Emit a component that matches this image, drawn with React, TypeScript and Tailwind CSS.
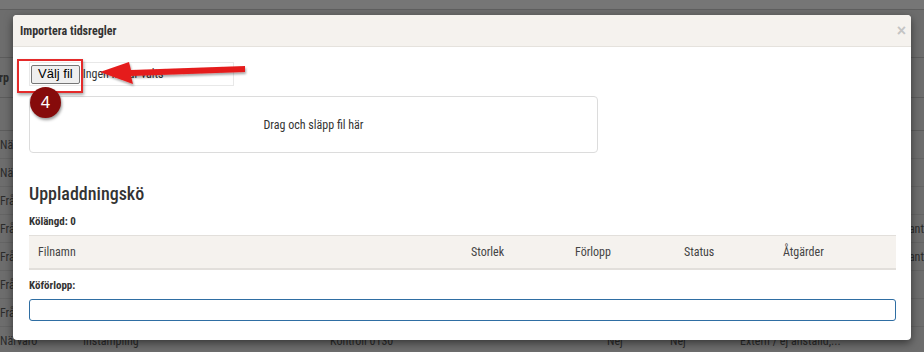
const font = "font-['Roboto_Condensed',Roboto,sans-serif]";

const bgRows = ['Nä', 'Nä', 'Frå', 'Frå', 'Frå', 'Frå', 'Frå'];

function Background() {
  return (
    <div className={`h-full w-full bg-[#6d6d6d] text-[12px] text-[#2b2b2b] ${font}`}>
      <div className="h-[10px] border-b border-[#5f5f5f] bg-[#767676]" />
      <div className="h-[47px]" />
      <div className="flex h-[41px] items-center border-y border-[#5c5c5c] font-bold">
        <span className="-ml-[1px]">rp</span>
      </div>
      <div className="h-[33px] border-b border-[#5c5c5c]" />
      {bgRows.map((r, i) => (
        <div key={i} className="flex h-[28px] items-center justify-between border-b border-[#646464]">
          <span>{r}</span>
          <span>{i === 3 || i === 4 ? 'ant' : ''}</span>
        </div>
      ))}
      <div className="flex h-[28px] items-center">
        <span className="w-[83px]">Närvaro</span>
        <span className="w-[247px]">Instämpling</span>
        <span className="w-[277px]">Kontroll 0130</span>
        <span className="w-[63px]">Nej</span>
        <span className="w-[70px]">Nej</span>
        <span>Extern / ej anställd,...</span>
      </div>
    </div>
  );
}

function Annotation() {
  return (
    <>
      <div className="absolute left-[17px] top-[59px] h-[34px] w-[66px] border-2 border-[#e42a2a] shadow-[1px_2px_3px_rgba(0,0,0,0.35)]" />
      <svg className="absolute left-[95px] top-[58px]" width="160" height="34" viewBox="0 0 160 34">
        <defs>
          <filter id="sh" x="-10%" y="-30%" width="130%" height="170%">
            <feDropShadow dx="1" dy="2" stdDeviation="1.2" floodColor="#000" floodOpacity="0.35" />
          </filter>
        </defs>
        <g filter="url(#sh)" fill="#e51c1c" stroke="none">
          <path d="M5 14 L34 4 L36 12 L150 8 L150 14 L36 18 L38 26 Z" />
        </g>
      </svg>
      <div className="absolute left-[30px] top-[87px] flex h-[31px] w-[31px] items-center justify-center rounded-full bg-[#860b0b] text-[17px] text-white shadow-[1px_2px_3px_rgba(0,0,0,0.4)] font-['Liberation_Sans',Arial,sans-serif]">
        4
      </div>
    </>
  );
}

function Modal() {
  return (
    <div className={`absolute left-[13px] top-[15px] flex h-[325px] w-[898px] flex-col overflow-hidden rounded-[4px] bg-white text-[#333] shadow-[0_3px_9px_rgba(0,0,0,0.5)] ${font}`}>
      <div className="flex h-[32px] shrink-0 items-center justify-between border-b border-[#e5e2dd] bg-[#f5f2ee] pl-[7px] pr-[5px]">
        <span className="text-[12px] font-bold text-[#333]">Importera tidsregler</span>
        <span className="text-[16px] font-bold leading-none text-[#c4c4c4] font-['Liberation_Sans',Arial,sans-serif]">×</span>
      </div>
      <div className="flex flex-col px-[16px] pt-[15px]">
        <div className="flex h-[24px] w-[205px] items-center border border-[#e8e8e8] pl-[1px]">
          <span className="flex h-[19px] items-center rounded-[2px] border border-[#767676] bg-[#efefef] px-[6px] text-[13px] text-black font-['Liberation_Sans',Arial,sans-serif]">
            Välj fil
          </span>
          <span className="pl-[3px] text-[12px] text-[#333]">Ingen fil har valts</span>
        </div>
        <div className="mt-[10px] flex h-[57px] w-[569px] items-center justify-center rounded-[4px] border border-[#dcdcdc] text-[12px] text-[#333]">
          Drag och släpp fil här
        </div>
        <h3 className="mt-[29px] text-[18px] font-medium leading-[24px] text-[#333]">Uppladdningskö</h3>
        <div className="mt-[9px] text-[11px] font-bold leading-[14px] text-[#333]">Kölängd: 0</div>
        <div className="mt-[6px] grid h-[35px] w-[867px] grid-cols-[433px_104px_109px_99px_1fr] items-center border-t border-b-2 border-[#e2dfdb] bg-[#f5f2ee] text-[12px] text-[#444]">
          <span className="pl-[9px]">Filnamn</span>
          <span className="pl-[9px]">Storlek</span>
          <span className="pl-[9px]">Förlopp</span>
          <span className="pl-[9px]">Status</span>
          <span className="pl-[9px]">Åtgärder</span>
        </div>
        <div className="mt-[9px] text-[11px] font-bold leading-[14px] text-[#333]">Köförlopp:</div>
        <div className="mt-[6px] h-[22px] w-[867px] rounded-[3px] border border-[#2f6ea3]" />
      </div>
    </div>
  );
}

export default function App() {
  return (
    <div className="relative h-[352px] w-[924px] overflow-hidden">
      <Background />
      <Modal />
      <Annotation />
    </div>
  );
}
